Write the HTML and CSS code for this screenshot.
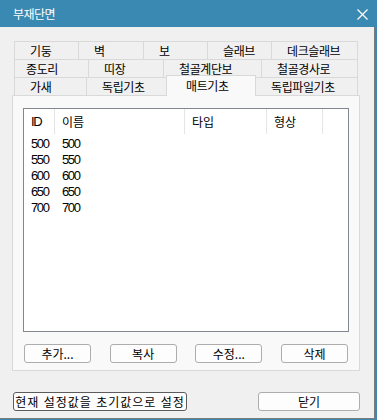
FILE: index.html
```html
<!DOCTYPE html>
<html lang="ko">
<head>
    <meta charset="UTF-8">
    <title>부재단면</title>
    <link rel="stylesheet" href="styles.css">
</head>
<body>
    <div class="window">
        <div class="titlebar">
            <span class="title">부재단면</span>
            <svg class="close" width="11" height="11" viewBox="0 0 11 11">
                <path d="M0.5 0.5 L10.5 10.5 M10.5 0.5 L0.5 10.5" stroke="#fff" stroke-width="1.2"/>
            </svg>
        </div>
        <div class="frame">
            <div class="client">
                <div class="tabs">
                    <div class="tab-row row1">
                        <div class="tab">기둥</div>
                        <div class="tab">벽</div>
                        <div class="tab">보</div>
                        <div class="tab">슬래브</div>
                        <div class="tab">데크슬래브</div>
                    </div>
                    <div class="tab-row row2">
                        <div class="tab pad-s">종도리</div>
                        <div class="tab">띠장</div>
                        <div class="tab">철골계단보</div>
                        <div class="tab">철골경사로</div>
                    </div>
                    <div class="tab-row row3">
                        <div class="tab">가새</div>
                        <div class="tab">독립기초</div>
                        <div class="tab active">매트기초</div>
                        <div class="tab">독립파일기초</div>
                    </div>
                </div>
                <div class="panel">
                    <div class="listbox">
                        <div class="list-head">
                            <div class="col c-id num">ID</div>
                            <div class="col c-name">이름</div>
                            <div class="col c-type">타입</div>
                            <div class="col c-shape">형상</div>
                        </div>
                        <div class="list-row"><span class="c-id num">500</span><span class="c-name num">500</span></div>
                        <div class="list-row"><span class="c-id num">550</span><span class="c-name num">550</span></div>
                        <div class="list-row"><span class="c-id num">600</span><span class="c-name num">600</span></div>
                        <div class="list-row"><span class="c-id num">650</span><span class="c-name num">650</span></div>
                        <div class="list-row"><span class="c-id num">700</span><span class="c-name num">700</span></div>
                    </div>
                    <div class="actions">
                        <button class="btn">추가...</button>
                        <button class="btn">복사</button>
                        <button class="btn">수정...</button>
                        <button class="btn">삭제</button>
                    </div>
                </div>
                <div class="footer">
                    <button class="btn btn-default">현재 설정값을 초기값으로 설정</button>
                    <button class="btn btn-close">닫기</button>
                </div>
            </div>
        </div>
    </div>
</body>
</html>
```

FILE: styles.css
```css
body {
    margin: 0;
    font-family: "Noto Sans CJK KR", "Liberation Sans", sans-serif;
    font-size: 12px;
    color: #000;
    background: #f0f0f0;
}
.window {
    width: 377px;
    height: 420px;
    display: flex;
    flex-direction: column;
}
.titlebar {
    height: 27px;
    background-color: #3a89b2;
    display: flex;
    align-items: center;
    justify-content: space-between;
    padding: 0 9px 0 13px;
    flex-shrink: 0;
}
.title {
    color: #fff;
    font-size: 12px;
    letter-spacing: -0.5px;
    line-height: 1;
}
.close {
    display: block;
    margin-top: 1px;
}
.frame {
    flex: 1;
    background-color: #3a89b2;
    padding: 0 2px 1px 0;
    display: flex;
}
.client {
    flex: 1;
    background: #f0f0f0;
    border-right: 1px solid #7b7b7b;
    border-bottom: 1px solid #7b7b7b;
    padding: 14px 0 0 12px;
}
.tabs {
    margin-left: 2px;
    width: 343px;
}
.tab-row {
    display: grid;
    height: 18px;
}
.row1 { grid-template-columns: 64px 65px 64px 64px 86px; }
.row2 { grid-template-columns: 74px 75px 98px 96px; }
.row3 { grid-template-columns: 72px 82px 87px 102px; }
.tab {
    border: 1px solid #d9d9d9;
    border-bottom: none;
    margin-right: -1px;
    padding-left: 15px;
    line-height: 17px;
    letter-spacing: -0.4px;
    background: #f0f0f0;
    white-space: nowrap;
}
.tab.pad-s { padding-left: 11px; }
.tab.active {
    position: relative;
    z-index: 1;
    background: #f9f9f9;
    margin: -2px -1px -1px -2px;
    padding-left: 19px;
    line-height: 19px;
}
.panel {
    border: 1px solid #d9d9d9;
    background: #f9f9f9;
    padding: 12px 0 0 10px;
    box-sizing: border-box;
    width: 348px;
    height: 276px;
}
.listbox {
    width: 326px;
    height: 224px;
    box-sizing: border-box;
    border: 1px solid #828790;
    background: #fff;
}
.list-head {
    display: flex;
    height: 25px;
    align-items: stretch;
}
.col {
    border-right: 1px solid #e5e5e5;
    padding-left: 7px;
    line-height: 25px;
    box-sizing: border-box;
}
.c-id { width: 31px; display: inline-block; padding-left: 7px; box-sizing: border-box; }
.c-name { width: 130px; display: inline-block; padding-left: 7px; box-sizing: border-box; }
.c-type { width: 82px; }
.c-shape { width: 56px; }
.num {
    font-family: "Liberation Sans", sans-serif;
    font-size: 13px;
    letter-spacing: -1.4px;
}
.list-row {
    height: 16px;
    line-height: 16px;
    white-space: nowrap;
}
.list-head + .list-row { margin-top: 1px; }
.actions {
    display: flex;
    justify-content: space-between;
    width: 324px;
    margin: 12px 0 0 1px;
}
.btn {
    font-family: "Noto Sans CJK KR", "Liberation Sans", sans-serif;
    font-size: 12px;
    height: 19px;
    padding: 0;
    line-height: 17px;
    background: #fdfdfd;
    border: 1px solid #adadad;
    border-radius: 3px;
    color: #000;
    width: 67px;
}
.footer {
    display: flex;
    justify-content: space-between;
    width: 347px;
    margin: 21px 0 0 1px;
}
.btn-default {
    width: 174px;
    border-color: #5c5c5c;
    letter-spacing: 1px;
}
.btn-close {
    width: 102px;
}
```
